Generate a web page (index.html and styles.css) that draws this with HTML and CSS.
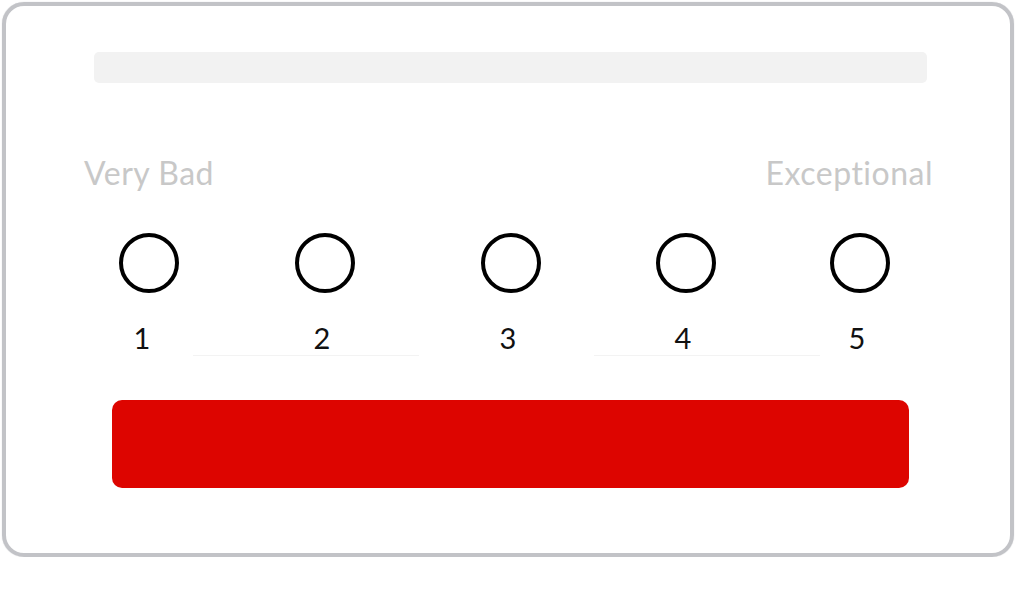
FILE: index.html
```html
<!DOCTYPE html>
<html>
<head>
  <title>Rating</title>
  <link rel="stylesheet" href="styles.css">
</head>
<body>
  <div class="card">
    <div class="question"></div>

    <div class="scale-labels">
      <span>Very Bad</span>
      <span>Exceptional</span>
    </div>

    <div class="options">
      <label class="option"><span class="radio"></span><span class="num">1</span></label>
      <label class="option"><span class="radio"></span><span class="num">2</span></label>
      <label class="option"><span class="radio"></span><span class="num">3</span></label>
      <label class="option"><span class="radio"></span><span class="num">4</span></label>
      <label class="option"><span class="radio"></span><span class="num">5</span></label>
    </div>

    <div class="rules">
      <span class="rule"></span>
      <span class="rule"></span>
    </div>

    <button class="submit"></button>
  </div>
</body>
</html>
```

FILE: styles.css
```css
body {
  margin: 0;
  background: #fff;
  font-family: Lato, "Open Sans", sans-serif;
}
.card {
  box-sizing: border-box;
  margin: 2px 0 0 2px;
  width: 1012px;
  height: 555px;
  border: 4px solid #c2c3c7;
  border-radius: 22px;
  box-shadow: 0 0 1px #c2c3c7;
  padding: 46px 83px 0 88px;
}
.question {
  height: 31px;
  background: #f2f2f2;
  border-radius: 5px;
}
.scale-labels {
  display: flex;
  justify-content: space-between;
  margin: 71px -6px 0 -10px;
  font-size: 32px;
  letter-spacing: 0.5px;
  line-height: 38px;
  color: #c8c8c8;
}
.options {
  display: grid;
  grid-template-columns: 176px 176px 196px 154px 194px;
  margin: 41px 0 0 -33px;
}
.option {
  display: flex;
  flex-direction: column;
  align-items: center;
}
.radio {
  box-sizing: border-box;
  width: 60px;
  height: 60px;
  border: 4px solid #000;
  border-radius: 50%;
}
.num {
  margin: 29px 6px 0 0;
  font-size: 29px;
  line-height: 32px;
  color: #111;
}
.option:first-child .num {
  margin-right: 14px;
}
.rules {
  display: flex;
  gap: 175px;
  margin: 1px 0 0 99px;
}
.rule {
  width: 226px;
  height: 1px;
  background: #f3f3f3;
}
.submit {
  display: block;
  width: 797px;
  height: 88px;
  margin: 44px 0 0 18px;
  border: none;
  border-radius: 10px;
  background: #dd0500;
  cursor: pointer;
}
```
